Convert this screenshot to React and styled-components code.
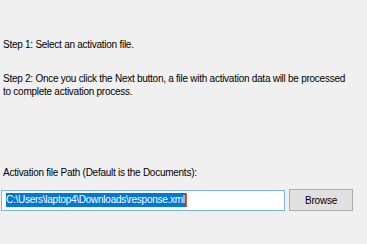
import React from 'react';
import styled, { createGlobalStyle } from 'styled-components';

const Global = createGlobalStyle`
    html, body {
        margin: 0;
        padding: 0;
        background: #f0f0f0;
    }
    body {
        width: 367px;
        height: 244px;
        overflow: hidden;
        font-family: "Liberation Sans", Arial, sans-serif;
        font-size: 10px;
        letter-spacing: -0.26px;
        color: #000;
    }
`;

const Page = styled.div`
    display: flex;
    flex-direction: column;
    padding: 38px 0 0 3px;
`;

const Step = styled.p`
    margin: 0 0 ${props => props.gap || 0}px 0;
    line-height: 13px;
    white-space: nowrap;
`;

const Label = styled.div`
    line-height: 13px;
    margin-bottom: 10px;
`;

const Row = styled.div`
    display: flex;
    align-items: center;
    gap: 4px;
    margin-left: -2px;
`;

const PathBox = styled.div`
    box-sizing: border-box;
    width: 284px;
    height: 21px;
    border: 1px solid #7eb4ea;
    background: #fff;
    display: flex;
    align-items: center;
    padding-left: 4px;
`;

const Selected = styled.span`
    background: #0078d7;
    color: #fff;
    line-height: 14px;
    padding-right: 1px;
    border-right: 1px solid #e0603a;
`;

const Button = styled.button`
    box-sizing: border-box;
    width: 64px;
    height: 22px;
    margin: 0;
    border: 1px solid #adadad;
    background: #e1e1e1;
    font-family: inherit;
    font-size: 10px;
    letter-spacing: -0.2px;
    color: #000;
    padding: 0;
`;

const App = () => {
    return (
        <>
            <Global />
            <Page>
                <Step gap={21}>Step 1: Select an activation file.</Step>
                <Step gap={68}>
                    Step 2: Once you click the Next button, a file with activation data will be processed
                    <br />
                    to complete activation process.
                </Step>
                <Label>Activation file Path (Default is the Documents):</Label>
                <Row>
                    <PathBox>
                        <Selected>C:\Users\laptop4\Downloads\response.xml</Selected>
                    </PathBox>
                    <Button>Browse</Button>
                </Row>
            </Page>
        </>
    );
};

export default App;
